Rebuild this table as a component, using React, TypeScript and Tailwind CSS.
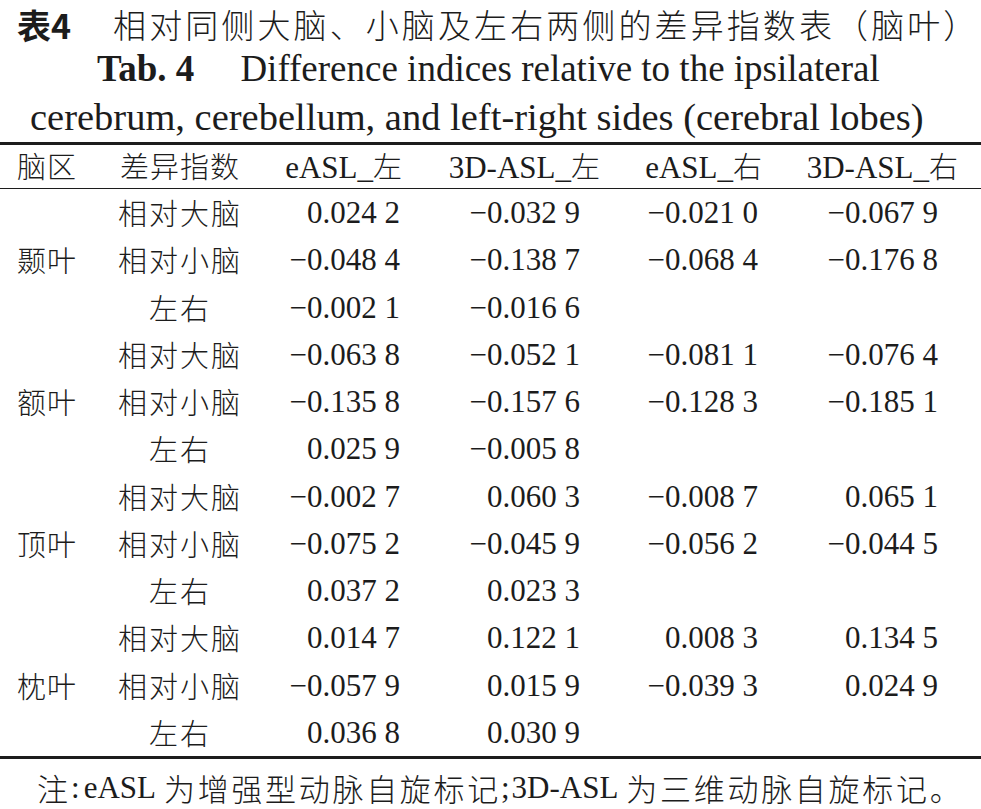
import React from "react";

const FONT = '"Liberation Serif", "Noto Sans CJK SC", serif';
const CJK = '"Noto Sans CJK SC", sans-serif';

type Row = { sub: string; v: (string | null)[] };
type Group = { name: string; rows: Row[] };

const M = "\u2212";

const groups: Group[] = [
  {
    name: "颞叶",
    rows: [
      { sub: "相对大脑", v: ["0.024 2", `${M}0.032 9`, `${M}0.021 0`, `${M}0.067 9`] },
      { sub: "相对小脑", v: [`${M}0.048 4`, `${M}0.138 7`, `${M}0.068 4`, `${M}0.176 8`] },
      { sub: "左右", v: [`${M}0.002 1`, `${M}0.016 6`, null, null] },
    ],
  },
  {
    name: "额叶",
    rows: [
      { sub: "相对大脑", v: [`${M}0.063 8`, `${M}0.052 1`, `${M}0.081 1`, `${M}0.076 4`] },
      { sub: "相对小脑", v: [`${M}0.135 8`, `${M}0.157 6`, `${M}0.128 3`, `${M}0.185 1`] },
      { sub: "左右", v: ["0.025 9", `${M}0.005 8`, null, null] },
    ],
  },
  {
    name: "顶叶",
    rows: [
      { sub: "相对大脑", v: [`${M}0.002 7`, "0.060 3", `${M}0.008 7`, "0.065 1"] },
      { sub: "相对小脑", v: [`${M}0.075 2`, `${M}0.045 9`, `${M}0.056 2`, `${M}0.044 5`] },
      { sub: "左右", v: ["0.037 2", "0.023 3", null, null] },
    ],
  },
  {
    name: "枕叶",
    rows: [
      { sub: "相对大脑", v: ["0.014 7", "0.122 1", "0.008 3", "0.134 5"] },
      { sub: "相对小脑", v: [`${M}0.057 9`, "0.015 9", `${M}0.039 3`, "0.024 9"] },
      { sub: "左右", v: ["0.036 8", "0.030 9", null, null] },
    ],
  },
];

const valPad = ["pr-[10px]", "pr-[30px]", "pr-[12px]", "pr-[43px]"];

function Zh({ children, className = "" }: { children: React.ReactNode; className?: string }) {
  return (
    <span className={`font-light ${className}`} style={{ fontFamily: CJK }}>
      {children}
    </span>
  );
}

export default function App() {
  return (
    <div className="w-[981px] bg-white text-[#1c1c1c]" style={{ fontFamily: FONT }}>
      {/* Title line 1 */}
      <div className="h-[44px] pt-[5px] flex items-center pl-[17px] text-[33px] leading-[39px] whitespace-nowrap">
        <span className="font-bold text-[34px]" style={{ fontFamily: CJK }}>
          表4
        </span>
        <Zh className="ml-[42px] tracking-[3.1px]">相对同侧大脑、小脑及左右两侧的差异指数表（脑叶）</Zh>
      </div>
      {/* Title line 2 */}
      <div className="h-[49px] flex items-center pl-[97px] text-[37px] leading-[49px] whitespace-nowrap">
        <span className="font-bold">Tab. 4</span>
        <span className="ml-[46px]">Difference indices relative to the ipsilateral</span>
      </div>
      {/* Title line 3 */}
      <div className="h-[49px] flex items-center pl-[30px] text-[38.5px] leading-[49px] whitespace-nowrap">
        cerebrum, cerebellum, and left-right sides (cerebral lobes)
      </div>

      {/* Table */}
      <div className="border-t-[3px] border-b-[3px] border-[#1c1c1c]">
        <div className="grid grid-cols-[100px_160px_150px_200px_160px_211px] h-[44px] items-center text-[31px] leading-none border-b border-[#1c1c1c]">
          <div className="pl-[17px] text-[29px]">
            <Zh className="tracking-[1px]">脑区</Zh>
          </div>
          <div className="text-center text-[29px]">
            <Zh className="tracking-[1px]">差异指数</Zh>
          </div>
          <div className="text-right pr-[8px]">
            eASL_<Zh className="text-[29px]">左</Zh>
          </div>
          <div className="text-right pr-[10px]">
            3D-ASL_<Zh className="text-[29px]">左</Zh>
          </div>
          <div className="text-right pr-[8px]">
            eASL_<Zh className="text-[29px]">右</Zh>
          </div>
          <div className="text-right pr-[23px]">
            3D-ASL_<Zh className="text-[29px]">右</Zh>
          </div>
        </div>
        <div className="grid grid-cols-[100px_160px_150px_200px_160px_211px] auto-rows-[47.25px] text-[31px] leading-none">
          {groups.map((g) => (
            <React.Fragment key={g.name}>
              <div className="row-span-3 flex items-center pl-[17px] text-[29px]">
                <Zh className="tracking-[1px]">{g.name}</Zh>
              </div>
              {g.rows.map((r, ri) => (
                <React.Fragment key={ri}>
                  <div
                    className={`flex items-center justify-center text-[29px] ${ri > 0 ? "col-start-2" : ""}`}
                  >
                    <Zh className="tracking-[2px]">{r.sub}</Zh>
                  </div>
                  {r.v.map((v, vi) => (
                    <div key={vi} className={`flex items-center justify-end ${valPad[vi]}`}>
                      {v ?? ""}
                    </div>
                  ))}
                </React.Fragment>
              ))}
            </React.Fragment>
          ))}
        </div>
      </div>

      {/* Footnote */}
      <div className="h-[46px] flex items-end pb-[2px] pl-[37px] text-[31px] leading-none whitespace-nowrap">
        <Zh className="tracking-[3px]">注</Zh>
        <span className="mr-[4px]">:</span>
        <span>eASL</span>
        <Zh className="ml-[8px] tracking-[2.7px]">为增强型动脉自旋标记</Zh>
        <span className="mr-[2px]">;</span>
        <span>3D-ASL</span>
        <Zh className="ml-[8px] tracking-[2.7px]">为三维动脉自旋标记。</Zh>
      </div>
    </div>
  );
}
